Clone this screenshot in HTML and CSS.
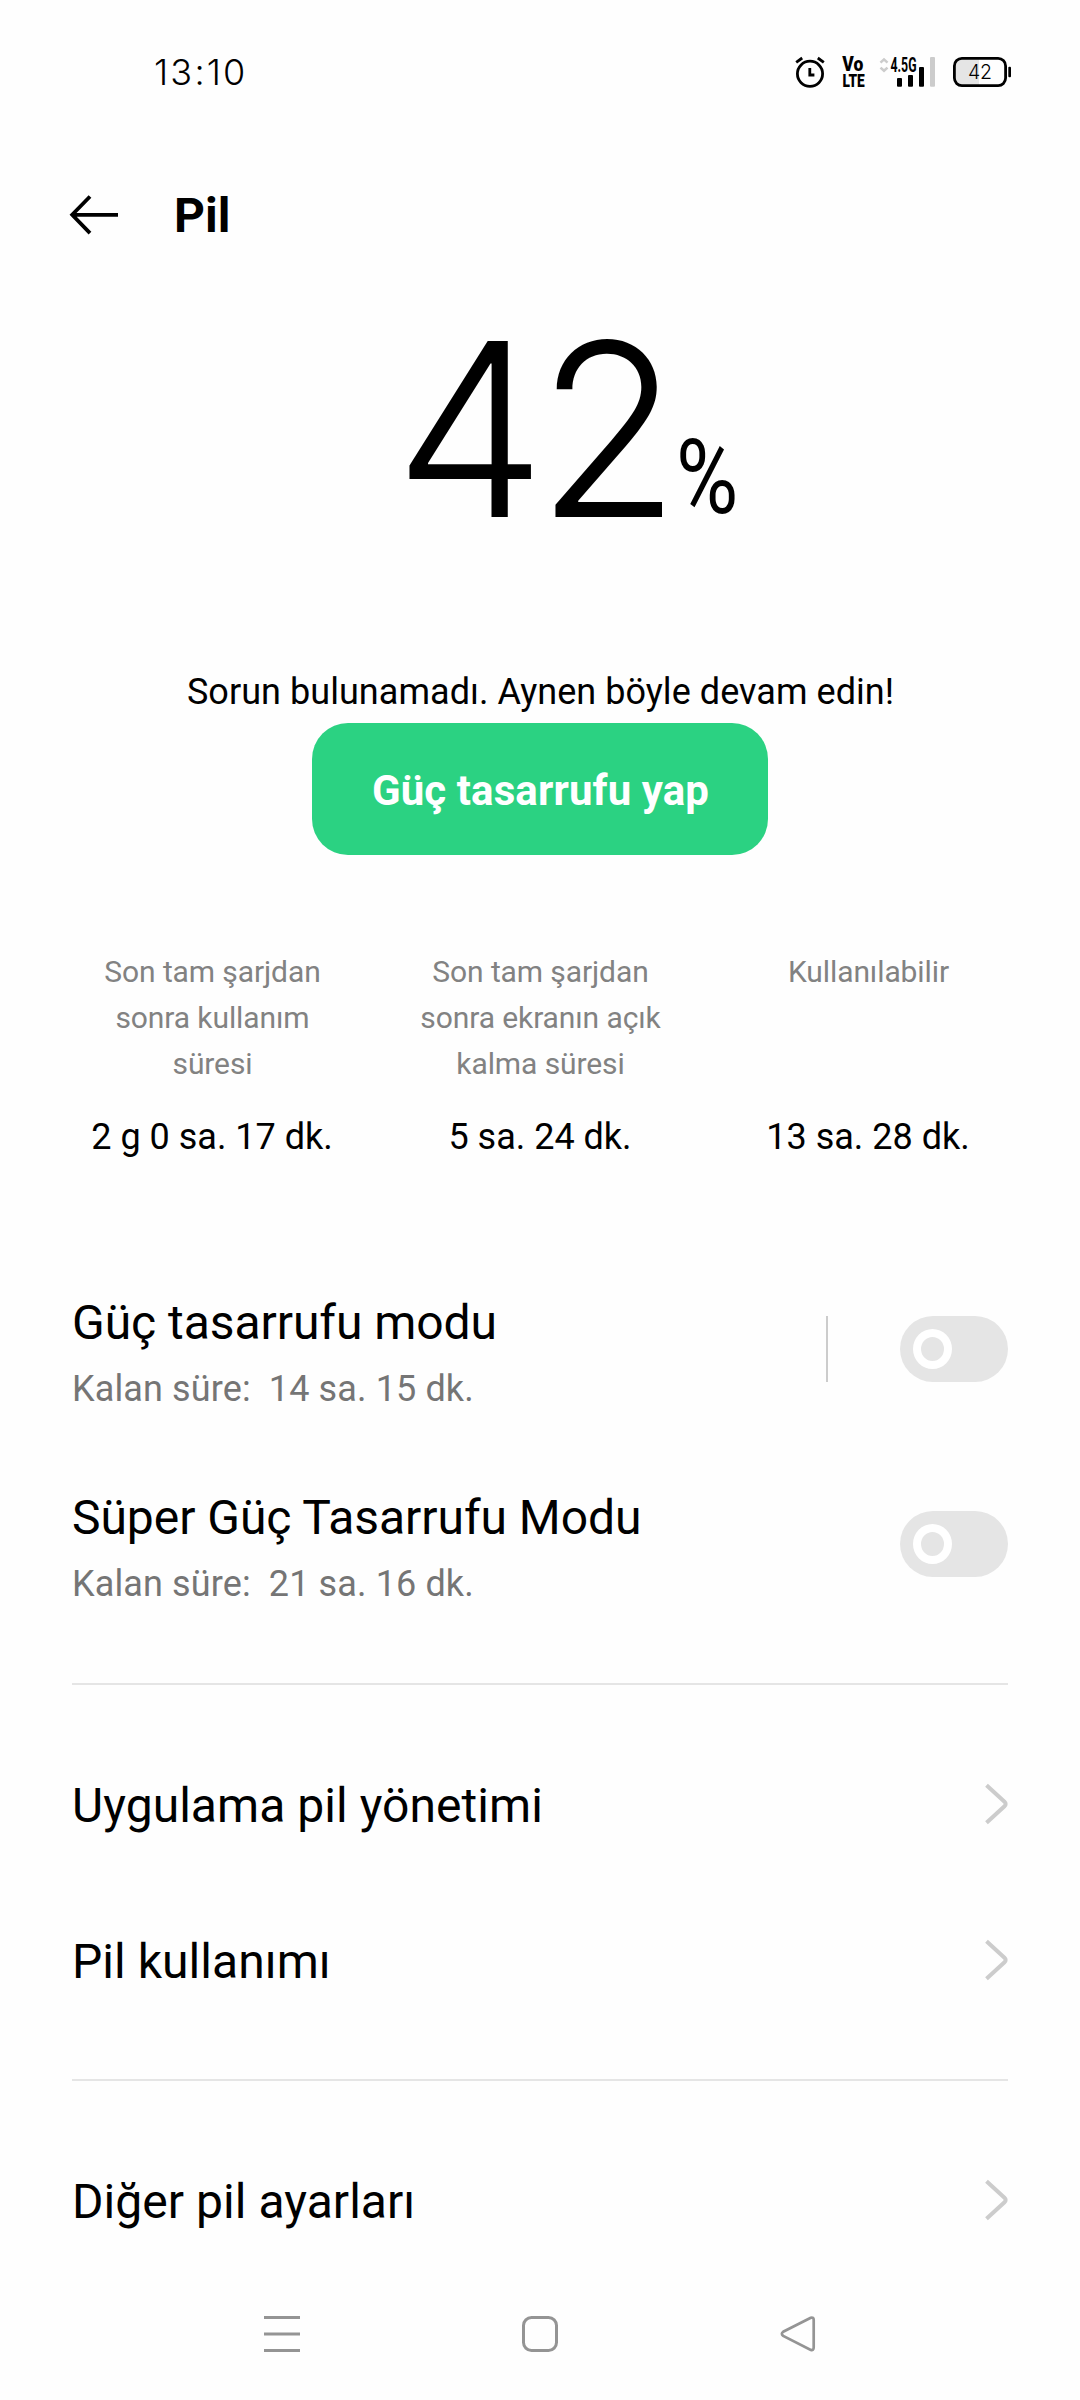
FILE: index.html
```
<!DOCTYPE html>
<html lang="tr">
<head>
<meta charset="utf-8">
<title>Pil</title>
<link rel="stylesheet" href="styles.css">
</head>
<body>
<div class="status">
  <span class="time">13:10</span>
  <svg class="status-icons" viewBox="790 50 226 44" width="226" height="44">
    <g fill="none" stroke="#000" stroke-width="2.8">
      <circle cx="810" cy="73.8" r="12.6"/>
      <path d="M796.2 62.4l6-4.4M823.8 62.4l-6-4.4M809.8 68v7h4.6"/>
    </g>
    <g class="cond">
      <text x="842.3" y="71" font-size="19.5" textLength="21" lengthAdjust="spacingAndGlyphs">Vo</text>
      <text x="842.4" y="87" font-size="18.6" textLength="22.4" lengthAdjust="spacingAndGlyphs">LTE</text>
      <text class="cell" x="890.5" y="72.3" font-size="19.5" textLength="26" lengthAdjust="spacingAndGlyphs">4.5G</text>
    </g>
    <path d="M880.5 62.6l3.5-3.2 3.5 3.2M880.5 67.6l3.5 3.2 3.5-3.2" fill="none" stroke="#ccc" stroke-width="2.6"/>
    <rect x="897" y="78" width="5" height="8.7" rx="1"/>
    <rect x="908" y="75" width="5" height="11.7" rx="1"/>
    <rect x="919" y="67" width="5" height="19.7" rx="1"/>
    <rect x="930" y="57" width="5" height="29.7" rx="1" fill="#ccc"/>
    <path d="M979 58.5h-17q-7.5 0-7.5 7.5v12q0 7.5 7.5 7.5h17z" fill="#e5e5e5"/>
    <rect x="954.4" y="58.4" width="51.2" height="27.2" rx="7.5" fill="none" stroke="#000" stroke-width="2.8"/>
    <rect x="1008.3" y="66.7" width="2.7" height="10.6" rx="1"/>
    <text class="level" x="968" y="79" font-size="19.5" textLength="24">42</text>
  </svg>
</div>

<header class="header">
  <svg width="52" height="44" viewBox="68 193 52 44" fill="none" stroke="#000" stroke-width="3.8">
    <path d="M118 214.8H72.5M90 196.5L72.2 214.8L90 233.1"/>
  </svg>
  <h1>Pil</h1>
</header>

<svg class="hero" viewBox="0 280 1080 280" width="1080" height="280">
  <text class="digits" x="394" y="517">4</text>
  <text class="digits" transform="translate(536.5 517) scale(.967 1)">2</text>
  <text class="percent" transform="translate(676 513) scale(.825 1)">%</text>
</svg>

<p class="message">Sorun bulunamadı. Aynen böyle devam edin!</p>
<button class="save">Güç tasarrufu yap</button>

<section class="stats">
  <div class="stat"><p>Son tam şarjdan<br>sonra kullanım<br>süresi</p><b>2 g 0 sa. 17 dk.</b></div>
  <div class="stat"><p>Son tam şarjdan<br>sonra ekranın açık<br>kalma süresi</p><b>5 sa. 24 dk.</b></div>
  <div class="stat"><p>Kullanılabilir</p><b>13 sa. 28 dk.</b></div>
</section>

<main>
  <div class="mode">
    <div class="mode-text"><h2>Güç tasarrufu modu</h2><p>Kalan süre:&nbsp; 14 sa. 15 dk.</p></div>
    <span class="separator"></span>
    <span class="switch"><i></i></span>
  </div>
  <div class="mode">
    <div class="mode-text"><h2>Süper Güç Tasarrufu Modu</h2><p>Kalan süre:&nbsp; 21 sa. 16 dk.</p></div>
    <span class="switch"><i></i></span>
  </div>
  <hr>
  <div class="link"><h2>Uygulama pil yönetimi</h2><svg class="chevron" viewBox="0 0 24 44"><path d="M2.5 3.2L20.5 19.8Q22.8 22 20.5 24.2L2.5 40.8"/></svg></div>
  <div class="link"><h2>Pil kullanımı</h2><svg class="chevron" viewBox="0 0 24 44"><path d="M2.5 3.2L20.5 19.8Q22.8 22 20.5 24.2L2.5 40.8"/></svg></div>
  <hr>
  <div class="link"><h2>Diğer pil ayarları</h2><svg class="chevron" viewBox="0 0 24 44"><path d="M2.5 3.2L20.5 19.8Q22.8 22 20.5 24.2L2.5 40.8"/></svg></div>
</main>

<nav class="nav">
  <svg viewBox="0 0 36 36"><path d="M0 1.5h36M0 18h36M0 34.5h36"/></svg>
  <svg viewBox="0 0 36 36"><rect x="1.5" y="1.5" width="33" height="33" rx="8"/></svg>
  <svg viewBox="0 0 36 36"><path d="M30.8 1.7L3.2 15.7Q.5 17.8 3.2 19.9L30.8 33.9Q33.7 34.6 33.7 31.6V4Q33.7 1 30.8 1.7Z" stroke-width="2.7"/></svg>
</nav>
</body>
</html>
```
FILE: styles.css
```
* { box-sizing: border-box; margin: 0; padding: 0; }

body {
  width: 1080px;
  height: 2400px;
  display: flex;
  flex-direction: column;
  overflow: hidden;
  background: #fefefe;
  color: #000;
  font-family: Roboto, sans-serif;
}

svg { display: block; flex: none; }

.status {
  height: 150px;
  padding: 50px 64px 0 154px;
  display: flex;
  justify-content: space-between;
  align-items: flex-start;
}
.time { font: 360 36px/44px Inter, sans-serif; letter-spacing: 2.2px; }
.cond { font-family: Roboto, sans-serif; font-weight: 900; }
.cell { font-weight: 700; }
.level { font-family: Inter, sans-serif; font-weight: 320; }

.header {
  height: 130px;
  padding-left: 68px;
  display: flex;
  align-items: center;
  gap: 54px;
}
h1 { padding-top: 2px; font-size: 48px; line-height: 60px; font-weight: 700; }

.hero { overflow: visible; }
.digits { font: 350 242px Inter, sans-serif; }
.percent { font: 400 103px Roboto, sans-serif; }

.message {
  margin-top: 110px;
  padding-left: 1px;
  font-size: 36px;
  line-height: 44px;
  letter-spacing: 0.05px;
  text-align: center;
}
.save {
  align-self: center;
  width: 456px;
  height: 132px;
  margin-top: 9px;
  padding: 3px 0 0 1px;
  border: 0;
  border-radius: 36px;
  background: #2bd282;
  color: #fff;
  font: 700 42px/129px Roboto, sans-serif;
  letter-spacing: 0.1px;
}

.stats {
  margin: 94px 48px 0;
  display: grid;
  grid-template-columns: repeat(3, 1fr);
  text-align: center;
}
.stat p {
  min-height: 138px;
  margin-bottom: 28px;
  padding-left: 1px;
  color: #828282;
  font-size: 30px;
  line-height: 46px;
  letter-spacing: -0.1px;
}
.stat b { display: block; font-size: 36px; line-height: 44px; font-weight: 400; }

main { margin-top: 93px; padding: 0 72px; }
h2 { font-size: 48px; line-height: 60px; font-weight: 400; }

.mode { height: 195px; display: flex; align-items: flex-start; }
.mode-text { flex: 1; padding-top: 41px; }
.mode-text h2 { letter-spacing: -0.05px; }
.mode-text p {
  margin-top: 14px;
  color: #757575;
  font-size: 36px;
  line-height: 44px;
  letter-spacing: 0.12px;
}
.separator { width: 2px; height: 66px; margin: 64px 72px 0 0; background: #ccc; }
.switch {
  width: 108px;
  height: 66px;
  margin-top: 64px;
  padding: 13px;
  border-radius: 33px;
  background: #e5e5e5;
}
.switch i {
  display: block;
  width: 39px;
  height: 40px;
  border: 8px solid #fff;
  border-radius: 50%;
}

hr { height: 2px; margin: 41px 0; border: 0; background: #e5e5e5; }

.link { height: 156px; display: flex; align-items: center; justify-content: space-between; }
.link h2 { padding-top: 3px; letter-spacing: 0.05px; }
.chevron { width: 24px; height: 44px; fill: none; stroke: #ccc; stroke-width: 4; }

.nav {
  margin-top: 38px;
  display: flex;
  justify-content: center;
  gap: 222px;
}
.nav svg { width: 36px; height: 36px; fill: none; stroke: #949494; stroke-width: 3; }
```
